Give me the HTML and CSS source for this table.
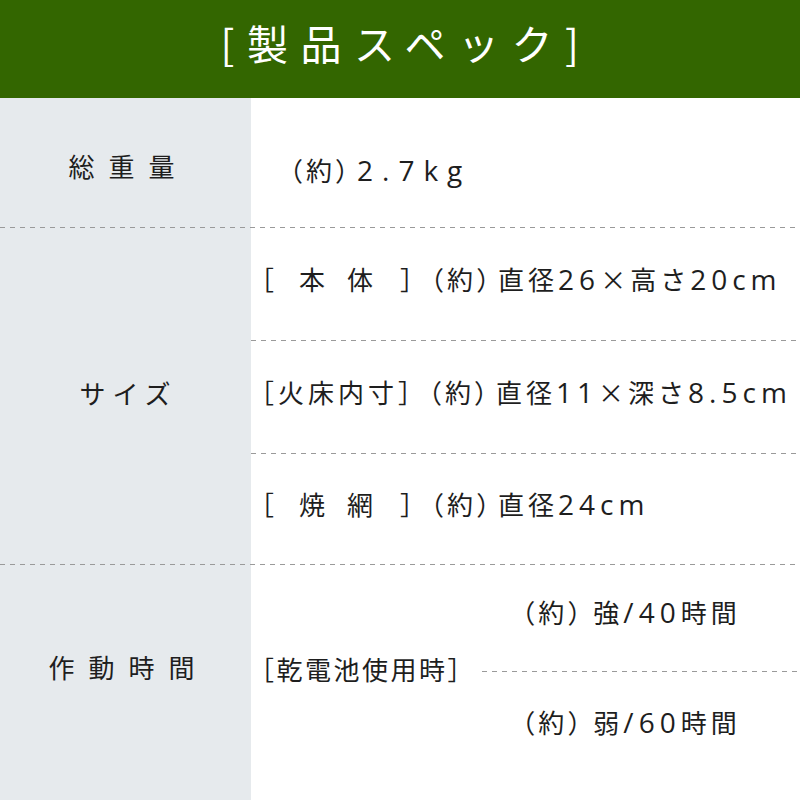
FILE: index.html
```html
<!DOCTYPE html>
<html lang="ja">
<head>
<meta charset="utf-8">
<link rel="stylesheet" href="styles.css">
</head>
<body>
<div class="sheet">
  <header class="title-bar"><h1 class="title">[製品スペック]</h1></header>

  <section class="row row-weight">
    <div class="label label-wide">総重量</div>
    <div class="value value-weight"><span class="paren">（約）</span><span class="num spaced">2.7kg</span></div>
  </section>
  <div class="rule rule-full"></div>

  <section class="row row-size">
    <div class="label label-kana">サイズ</div>
    <div class="subs">
      <div class="sub">［<span class="sp1">本</span><span class="sp2">体</span><span class="sp3">］</span><span class="paren">（約）</span>直径<span class="num">26</span>×高さ<span class="num">20cm</span></div>
      <div class="rule"></div>
      <div class="sub">［火床内寸］<span class="paren">（約）</span>直径<span class="num">11</span>×深さ<span class="num">8.5cm</span></div>
      <div class="rule"></div>
      <div class="sub">［<span class="sp1">焼</span><span class="sp2">網</span><span class="sp3">］</span><span class="paren">（約）</span>直径<span class="num">24cm</span></div>
    </div>
  </section>
  <div class="rule rule-full"></div>

  <section class="row row-time">
    <div class="label label-wide">作動時間</div>
    <div class="time">
      <div class="time-key">［乾電池使用時］</div>
      <div class="time-vals">
        <div class="time-val"><span class="paren">（約）</span>強<span class="num">/40</span>時間</div>
        <div class="rule"></div>
        <div class="time-val"><span class="paren">（約）</span>弱<span class="num">/60</span>時間</div>
      </div>
    </div>
  </section>
</div>
</body>
</html>
```

FILE: styles.css
```css
html, body {
  margin: 0;
  padding: 0;
  background: #fff;
}

.sheet {
  width: 800px;
  min-height: 800px;
  background: linear-gradient(to right, #e6eaed 251px, #ffffff 251px);
  font-family: "Noto Sans CJK JP", "Noto Sans", sans-serif;
  color: #1e1e1e;
  font-size: 26px;
  line-height: 1;
}

.title-bar {
  height: 98px;
  box-sizing: border-box;
  padding-bottom: 13px;
  background: #336600;
  display: flex;
  align-items: center;
  justify-content: center;
}

.title {
  margin: 0;
  color: #fff;
  font-weight: 400;
  font-size: 41px;
  letter-spacing: 12.5px;
  padding-left: 12px;
}

.row {
  display: flex;
}

.label {
  width: 251px;
  flex: none;
  box-sizing: border-box;
  display: flex;
  align-items: center;
  justify-content: center;
}

.label-wide {
  letter-spacing: 14px;
  padding-left: 6px;
  padding-bottom: 8px;
}

.label-kana {
  letter-spacing: 7px;
  padding-left: 6px;
  padding-bottom: 6px;
}

.num {
  font-family: "Open Sans", "Noto Sans CJK JP", sans-serif;
  font-size: 28px;
  line-height: 26px;
  letter-spacing: 5px;
}

.paren {
  font-feature-settings: "palt";
  margin-right: 4px;
}

.row-weight {
  height: 129px;
}

.row-weight .label,
.value-weight {
  padding-top: 14px;
  box-sizing: border-box;
}

.value-weight {
  display: flex;
  align-items: center;
  padding-left: 38px;
  letter-spacing: 4px;
}

.value-weight .paren {
  margin-right: 0;
}

.num.spaced {
  letter-spacing: 9px;
  margin-left: 4px;
}

.subs {
  flex: 1;
  display: flex;
  flex-direction: column;
}

.sub {
  height: 112px;
  box-sizing: border-box;
  padding-bottom: 10px;
  display: flex;
  align-items: center;
  margin-left: -3px;
  letter-spacing: 4px;
  white-space: nowrap;
}

.sub:last-child {
  height: 110px;
}

.sp1 {
  margin-left: 21px;
}

.sp2 {
  margin-left: 18px;
}

.sp3 {
  margin-left: 23px;
}

.rule {
  height: 1px;
  background: repeating-linear-gradient(to right, #9a9a9a 0 5px, transparent 5px 10px);
}

.rule-full {
  width: 800px;
}

.row-time {
  height: 212px;
}

.time {
  flex: 1;
  display: flex;
  align-items: center;
}

.time-key {
  margin-left: -3px;
  width: 234px;
  flex: none;
  letter-spacing: 2.5px;
  padding-bottom: 4px;
}

.time-vals {
  flex: 1;
  display: flex;
  flex-direction: column;
}

.time-val {
  height: 106px;
  box-sizing: border-box;
  padding-bottom: 6px;
  display: flex;
  align-items: center;
  justify-content: center;
  letter-spacing: 4px;
  padding-right: 20px;
}

.time-val .paren {
  margin-right: 8px;
}

.time-val:first-child {
  padding-bottom: 12px;
}
```
